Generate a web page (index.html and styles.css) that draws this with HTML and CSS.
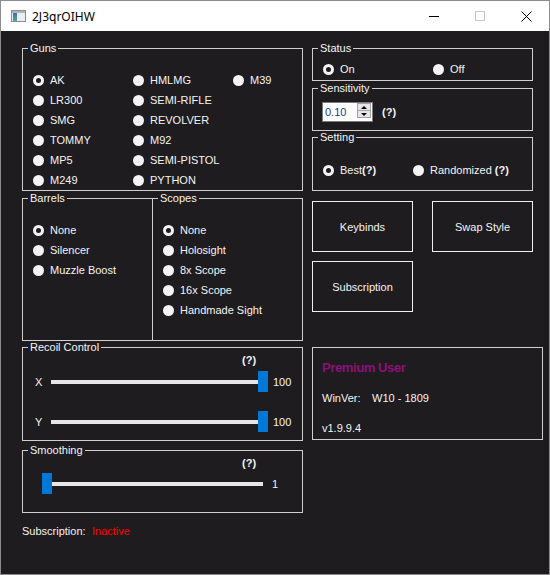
FILE: index.html
```html
<!DOCTYPE html>
<html lang="en">
<head>
    <meta charset="UTF-8">
    <title>2J3qrOIHW</title>
    <link rel="stylesheet" href="styles.css">
</head>
<body>
    <div class="window">
        <div class="titlebar">
            <svg class="app-icon" width="15" height="12" viewBox="0 0 15 12">
                <defs>
                    <linearGradient id="panel" x1="0" y1="0" x2="0" y2="1">
                        <stop offset="0" stop-color="#3d6fb8"/>
                        <stop offset="1" stop-color="#4fa88c"/>
                    </linearGradient>
                </defs>
                <rect x="0.5" y="0.5" width="14" height="11" fill="#e9eef0" stroke="#8e8e8e"/>
                <rect x="1" y="1" width="13" height="2" fill="#b4b4b4"/>
                <rect x="2" y="3" width="4" height="8" fill="url(#panel)"/>
            </svg>
            <span class="title">2J3qrOIHW</span>
            <div class="caption-buttons">
                <div class="caption-btn">
                    <svg width="10" height="10" viewBox="0 0 10 10"><path d="M0 5.5h10" stroke="#000" stroke-width="1"/></svg>
                </div>
                <div class="caption-btn">
                    <svg width="10" height="10" viewBox="0 0 10 10"><rect x="0.5" y="0.5" width="9" height="9" fill="none" stroke="#c6c6c6"/></svg>
                </div>
                <div class="caption-btn">
                    <svg width="11" height="11" viewBox="0 0 11 11"><path d="M0.5 0.5l10 10M10.5 0.5l-10 10" stroke="#000" stroke-width="1"/></svg>
                </div>
            </div>
        </div>

        <div class="client">
            <div class="col-left">
                <fieldset class="group guns">
                    <legend>Guns</legend>
                    <div class="gun-list">
                        <label class="radio"><input type="radio" name="gun" checked>AK</label>
                        <label class="radio"><input type="radio" name="gun">LR300</label>
                        <label class="radio"><input type="radio" name="gun">SMG</label>
                        <label class="radio"><input type="radio" name="gun">TOMMY</label>
                        <label class="radio"><input type="radio" name="gun">MP5</label>
                        <label class="radio"><input type="radio" name="gun">M249</label>
                        <label class="radio"><input type="radio" name="gun">HMLMG</label>
                        <label class="radio"><input type="radio" name="gun">SEMI-RIFLE</label>
                        <label class="radio"><input type="radio" name="gun">REVOLVER</label>
                        <label class="radio"><input type="radio" name="gun">M92</label>
                        <label class="radio"><input type="radio" name="gun">SEMI-PISTOL</label>
                        <label class="radio"><input type="radio" name="gun">PYTHON</label>
                        <label class="radio"><input type="radio" name="gun">M39</label>
                    </div>
                </fieldset>

                <div class="attach-row">
                    <fieldset class="group barrels">
                        <legend>Barrels</legend>
                        <div class="attach-list">
                            <label class="radio"><input type="radio" name="barrel" checked>None</label>
                            <label class="radio"><input type="radio" name="barrel">Silencer</label>
                            <label class="radio"><input type="radio" name="barrel">Muzzle Boost</label>
                        </div>
                    </fieldset>
                    <fieldset class="group scopes">
                        <legend>Scopes</legend>
                        <div class="attach-list">
                            <label class="radio"><input type="radio" name="scope" checked>None</label>
                            <label class="radio"><input type="radio" name="scope">Holosight</label>
                            <label class="radio"><input type="radio" name="scope">8x Scope</label>
                            <label class="radio"><input type="radio" name="scope">16x Scope</label>
                            <label class="radio"><input type="radio" name="scope">Handmade Sight</label>
                        </div>
                    </fieldset>
                </div>

                <fieldset class="group recoil">
                    <legend>Recoil Control</legend>
                    <div class="help">(?)</div>
                    <div class="slider-row row-x">
                        <label>X</label>
                        <input type="range" min="0" max="100" value="100">
                        <span class="value">100</span>
                    </div>
                    <div class="slider-row row-y">
                        <label>Y</label>
                        <input type="range" min="0" max="100" value="100">
                        <span class="value">100</span>
                    </div>
                </fieldset>

                <fieldset class="group smoothing">
                    <legend>Smoothing</legend>
                    <div class="help">(?)</div>
                    <div class="slider-row smooth-row">
                        <input type="range" min="1" max="100" value="1">
                        <span class="value">1</span>
                    </div>
                </fieldset>

                <div class="sub-status">
                    <span class="sub-label">Subscription:</span>
                    <span class="inactive">Inactive</span>
                </div>
            </div>

            <div class="col-right">
                <fieldset class="group status">
                    <legend>Status</legend>
                    <div class="status-list">
                        <label class="radio"><input type="radio" name="status" checked>On</label>
                        <label class="radio"><input type="radio" name="status">Off</label>
                    </div>
                </fieldset>

                <fieldset class="group sensitivity">
                    <legend>Sensitivity</legend>
                    <div class="sens-row">
                        <div class="numeric">
                            <input type="text" value="0.10">
                            <div class="spin">
                                <span class="up"></span>
                                <span class="down"></span>
                            </div>
                        </div>
                        <span class="help-inline">(?)</span>
                    </div>
                </fieldset>

                <fieldset class="group setting">
                    <legend>Setting</legend>
                    <div class="setting-list">
                        <label class="radio"><input type="radio" name="setting" checked><span>Best<b>(?)</b></span></label>
                        <label class="radio"><input type="radio" name="setting"><span>Randomized <b>(?)</b></span></label>
                    </div>
                </fieldset>

                <div class="buttons">
                    <button class="btn">Keybinds</button>
                    <button class="btn">Swap Style</button>
                    <button class="btn">Subscription</button>
                </div>

                <div class="info">
                    <div class="info-line premium">Premium User</div>
                    <div class="info-line"><span class="info-label">WinVer:</span>W10 - 1809</div>
                    <div class="info-line">v1.9.9.4</div>
                </div>
            </div>
        </div>
    </div>
</body>
</html>
```

FILE: styles.css
```css
* {
    box-sizing: border-box;
}
body {
    margin: 0;
    font-family: "Liberation Sans", Arial, sans-serif;
    font-size: 11px;
}
.window {
    width: 550px;
    height: 575px;
    border: 1px solid #8c8c8c;
    background-color: #1e1c1e;
    display: flex;
    flex-direction: column;
}

/* title bar */
.titlebar {
    height: 30px;
    flex-shrink: 0;
    background-color: #fff;
    display: flex;
    align-items: center;
}
.app-icon {
    margin-left: 10px;
}
.title {
    margin-left: 6px;
    font-family: "Noto Sans", "Open Sans", sans-serif;
    font-size: 12px;
    color: #000;
}
.caption-buttons {
    margin-left: auto;
    display: flex;
    height: 100%;
}
.caption-btn {
    width: 46px;
    display: flex;
    align-items: center;
    justify-content: center;
}

/* client area */
.client {
    flex: 1;
    display: flex;
    gap: 9px;
    padding: 11px 0 0 21px;
    color: #f4f4f4;
}
.col-left {
    width: 281px;
}
.col-right {
    width: 231px;
}

.group {
    margin: 0;
    padding: 0;
    min-width: 0;
    border: 1px solid #cfcfcf;
}
.group legend {
    margin-left: 5px;
    padding: 0 2px;
    font-size: 11px;
    line-height: 13px;
}

.radio {
    display: flex;
    align-items: center;
    gap: 6px;
    height: 20px;
    white-space: nowrap;
}
.radio input {
    appearance: none;
    -webkit-appearance: none;
    margin: 0;
    width: 11px;
    height: 11px;
    flex-shrink: 0;
    border-radius: 50%;
    background-color: #f4f4f4;
}
.radio input:checked {
    background-color: #1e1c1e;
    border: 3px solid #f4f4f4;
}
.radio b {
    font-weight: bold;
}

/* guns */
.gun-list {
    display: grid;
    grid-template-columns: repeat(3, 100px);
    grid-template-rows: repeat(6, 20px);
    grid-auto-flow: column;
    padding: 15px 0 0 10px;
}

/* barrels + scopes */
.attach-row {
    display: flex;
    height: 149px;
    margin-top: 1px;
}
.barrels {
    width: 131px;
}
.scopes {
    width: 151px;
    margin-left: -1px;
}
.attach-list {
    padding: 15px 0 0 10px;
}

/* sliders */
.help {
    height: 12px;
    line-height: 12px;
    padding-left: 219px;
    font-weight: bold;
}
.slider-row {
    display: flex;
    align-items: center;
    height: 21px;
}
.slider-row label {
    width: 16px;
}
.value {
    margin-left: 5px;
}
.recoil {
    padding-bottom: 8px;
}
.row-x,
.row-y {
    padding-left: 12px;
}
.row-x {
    margin-top: 5px;
}
.row-y {
    margin-top: 19px;
}
.row-x input,
.row-y input {
    width: 217px;
}
.smoothing {
    margin-top: 3px;
    padding-bottom: 18px;
}
.smooth-row {
    margin-top: 4px;
    padding-left: 19px;
}
.smooth-row input {
    width: 221px;
}
.smooth-row .value {
    margin-left: 9px;
}

input[type="range"] {
    -webkit-appearance: none;
    appearance: none;
    margin: 0;
    height: 21px;
    background: transparent;
}
input[type="range"]::-webkit-slider-runnable-track {
    height: 4px;
    background-color: #e6e6e6;
}
input[type="range"]::-webkit-slider-thumb {
    -webkit-appearance: none;
    width: 10px;
    height: 21px;
    margin-top: -8.5px;
    border: none;
    border-radius: 0;
    background-color: #0078d7;
}
input[type="range"]::-moz-range-track {
    height: 4px;
    background-color: #e6e6e6;
}
input[type="range"]::-moz-range-thumb {
    width: 10px;
    height: 21px;
    border: none;
    border-radius: 0;
    background-color: #0078d7;
}

.sub-status {
    display: flex;
    margin-top: 12px;
    line-height: 13px;
}
.sub-label {
    width: 70px;
}
.inactive {
    color: #ff0000;
}

/* right column */
.status,
.sensitivity,
.setting {
    width: 221px;
}
.status-list {
    display: grid;
    grid-template-columns: 110px 110px;
    padding: 4px 0 1px 10px;
}
.sensitivity {
    margin-top: 1px;
}
.sens-row {
    display: flex;
    align-items: center;
    padding: 7px 0 8px 9px;
}
.numeric {
    display: flex;
    width: 51px;
    height: 20px;
    border: 1px solid #7a7a7a;
    background-color: #fff;
}
.numeric input {
    width: 34px;
    height: 18px;
    border: 0;
    padding: 0 0 0 2px;
    outline: none;
    background: transparent;
    font-family: "Liberation Sans", Arial, sans-serif;
    font-size: 11px;
    color: #1a3596;
}
.spin {
    width: 14px;
    height: 15px;
    margin-left: auto;
    margin-right: 1px;
    display: flex;
    flex-direction: column;
    border: 1px solid #a3a3a3;
    background-color: #e6e6e6;
}
.spin span {
    flex: 1;
    display: flex;
    align-items: center;
    justify-content: center;
}
.spin .down {
    border-top: 1px solid #a3a3a3;
}
.spin .up::before {
    content: "";
    border-left: 3px solid transparent;
    border-right: 3px solid transparent;
    border-bottom: 3px solid #000;
}
.spin .down::before {
    content: "";
    border-left: 3px solid transparent;
    border-right: 3px solid transparent;
    border-top: 3px solid #000;
}
.help-inline {
    margin-left: 9px;
    font-weight: bold;
}
.setting-list {
    display: grid;
    grid-template-columns: 90px auto;
    padding: 16px 0 10px 10px;
}

.buttons {
    display: grid;
    grid-template-columns: 101px 101px;
    grid-auto-rows: 51px;
    column-gap: 19px;
    row-gap: 9px;
    margin-top: 10px;
}
.btn {
    padding: 0;
    border: 1px solid #f0f0f0;
    background: none;
    color: #f4f4f4;
    font-family: "Liberation Sans", Arial, sans-serif;
    font-size: 11px;
}

.info {
    width: 231px;
    height: 93px;
    margin-top: 35px;
    padding: 5px 9px 0;
    border: 1px solid #cfcfcf;
}
.info-line {
    line-height: 30px;
    white-space: nowrap;
}
.premium {
    font-size: 13px;
    font-weight: bold;
    letter-spacing: -0.4px;
    color: #8e1078;
}
.info-label {
    display: inline-block;
    width: 50px;
}
```
